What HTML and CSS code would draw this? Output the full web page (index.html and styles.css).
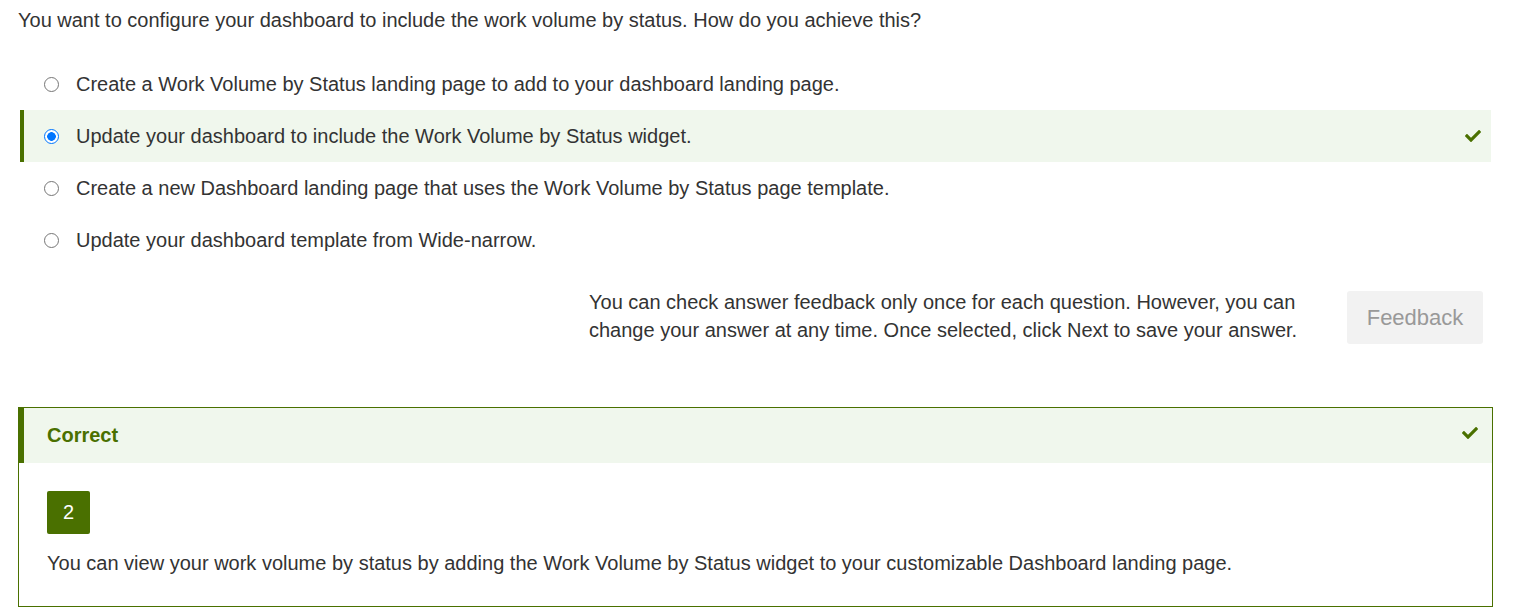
FILE: index.html
```html
<!DOCTYPE html>
<html>
<head>
<meta charset="utf-8">
<link rel="stylesheet" href="styles.css">
</head>
<body>
<div class="page">
  <p class="question">You want to configure your dashboard to include the work volume by status. How do you achieve this?</p>
  <ul class="options">
    <li class="option"><span class="radio"></span><span class="label">Create a Work Volume by Status landing page to add to your dashboard landing page.</span></li>
    <li class="option selected"><span class="radio checked"></span><span class="label">Update your dashboard to include the Work Volume by Status widget.</span>
      <svg class="check" viewBox="0 0 512 512" width="16" height="16"><path fill="#4a7000" d="M173.9 439.4l-166.4-166.4c-10-10-10-26.2 0-36.2l36.2-36.2c10-10 26.2-10 36.2 0L192 312.7 432.1 72.6c10-10 26.2-10 36.2 0l36.2 36.2c10 10 10 26.2 0 36.2l-294.4 294.4c-10 10-26.2 10-36.2 0z"/></svg>
    </li>
    <li class="option"><span class="radio"></span><span class="label">Create a new Dashboard landing page that uses the Work Volume by Status page template.</span></li>
    <li class="option"><span class="radio"></span><span class="label">Update your dashboard template from Wide-narrow.</span></li>
  </ul>
  <div class="actions">
    <p class="note">You can check answer feedback only once for each question. However, you can change your answer at any time. Once selected, click Next to save your answer.</p>
    <button class="feedback">Feedback</button>
  </div>
  <div class="result">
    <div class="result-head">
      <span class="result-title">Correct</span>
      <svg class="check head-check" viewBox="0 0 512 512" width="16" height="16"><path fill="#4a7000" d="M173.9 439.4l-166.4-166.4c-10-10-10-26.2 0-36.2l36.2-36.2c10-10 26.2-10 36.2 0L192 312.7 432.1 72.6c10-10 26.2-10 36.2 0l36.2 36.2c10 10 10 26.2 0 36.2l-294.4 294.4c-10 10-26.2 10-36.2 0z"/></svg>
    </div>
    <div class="result-body">
      <div class="badge">2</div>
      <p class="explain">You can view your work volume by status by adding the Work Volume by Status widget to your customizable Dashboard landing page.</p>
    </div>
  </div>
</div>
</body>
</html>
```
FILE: styles.css
```css
* { box-sizing: border-box; }
body {
  margin: 0;
  font-family: "Liberation Sans", Arial, sans-serif;
  color: #333;
  background: #fff;
}
.page {
  padding: 0 26px 0 18px;
}
.question {
  margin: 0;
  padding-top: 8px;
  font-size: 20px;
  line-height: 24px;
}
.options {
  list-style: none;
  margin: 26px 0 0 0;
  padding: 0 2px 0 2px;
}
.option {
  display: flex;
  align-items: center;
  height: 52px;
  padding-left: 20px;
  padding-right: 10px;
  font-size: 20px;
  border-left: 4px solid transparent;
}
.option.selected {
  background: #f0f7ed;
  border-left-color: #4a7000;
}
.radio {
  width: 15px;
  height: 15px;
  border: 1.5px solid #767676;
  border-radius: 50%;
  flex: none;
  margin-right: 17px;
  background: #fff;
}
.radio.checked {
  border: 1.8px solid #0075ff;
  background: radial-gradient(circle, #0075ff 0 4px, #fff 4.6px);
}
.label { flex: 1; }
.check { flex: none; }
.head-check { margin-bottom: 5px; }
.actions {
  display: flex;
  justify-content: flex-end;
  align-items: flex-start;
  margin-top: 22px;
  padding-right: 10px;
}
.note {
  margin: 0;
  width: 758px;
  font-size: 20px;
  line-height: 28px;
}
.feedback {
  margin-top: 3px;
  width: 136px;
  height: 53px;
  border: none;
  border-radius: 3px;
  background: #f2f2f2;
  color: #999;
  font-family: "Liberation Sans", Arial, sans-serif;
  font-size: 22px;
  padding: 0;
}
.result {
  margin-top: 63px;
  border: 1px solid #4a7000;
}
.result-head {
  display: flex;
  align-items: center;
  justify-content: space-between;
  height: 55px;
  background: #f0f7ed;
  border-left: 5px solid #4a7000;
  padding: 0 14px 0 23px;
}
.result-title {
  font-size: 20px;
  font-weight: bold;
  color: #4a7000;
}
.result-body {
  padding: 28px 28px 31px 28px;
}
.badge {
  width: 43px;
  height: 43px;
  background: #4a7000;
  color: #fff;
  border-radius: 2px;
  font-size: 20px;
  display: flex;
  align-items: center;
  justify-content: center;
}
.explain {
  margin: 17px 0 0 0;
  font-size: 20px;
  line-height: 24px;
}
```
